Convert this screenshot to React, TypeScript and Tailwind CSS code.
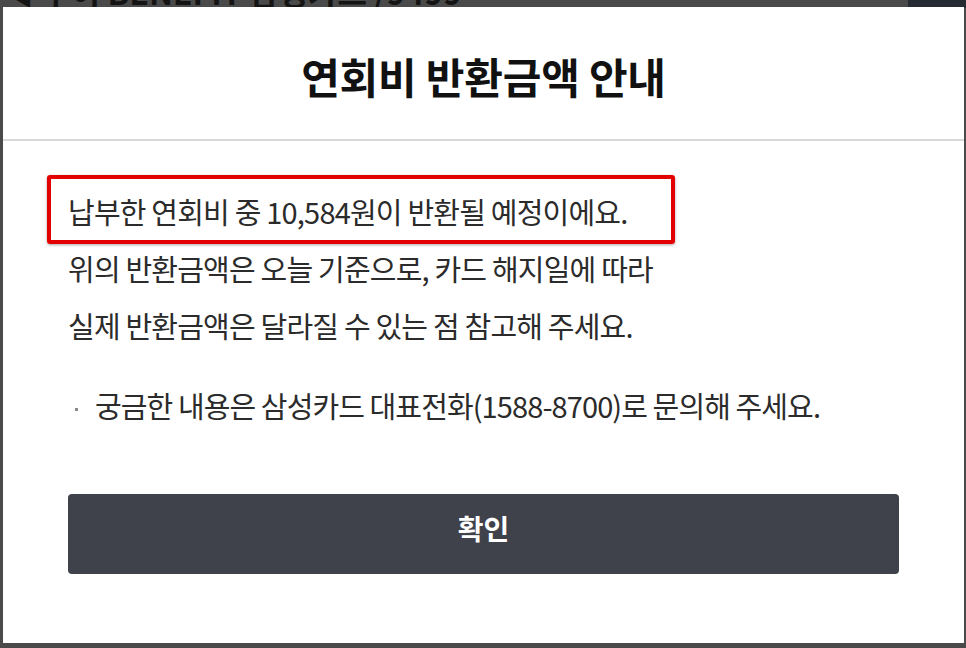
import React from 'react';

const font = { fontFamily: '"Noto Sans CJK KR", "Noto Sans", sans-serif' };

const BodyLine: React.FC<{ children: React.ReactNode }> = ({ children }) => (
  <p className="text-[29px] leading-[57px] tracking-[-0.8px] text-[#2b2b2b] whitespace-nowrap">{children}</p>
);

const App: React.FC = () => {
  return (
    <div style={font} className="relative w-[966px] h-[648px] bg-[#4a4a4a] overflow-hidden">
      {/* dimmed page behind the dialog */}
      <div className="-mt-[24px] pl-[2px] text-[32px] leading-[31px] font-bold text-[#141414] whitespace-nowrap">
        ◀ 부이 BENEFIT 삼성카드 /9499
      </div>
      <div className="absolute right-0 top-0 w-[58px] h-[8px] bg-[#262a33]" />

      {/* dialog */}
      <div className="absolute left-[3px] top-[7px] w-[961px] h-[636px] bg-white flex flex-col">
        <div className="h-[134px] shrink-0 flex items-center justify-center pt-[4px] border-b-2 border-[#d9d9d9]">
          <h1 className="text-[42px] font-bold tracking-[-0.2px] text-[#111]">연회비 반환금액 안내</h1>
        </div>

        <div className="relative flex flex-col pt-[42px] px-[65px]">
          <BodyLine>납부한 연회비 중 10,584원이 반환될 예정이에요.</BodyLine>
          <BodyLine>위의 반환금액은 오늘 기준으로, 카드 해지일에 따라</BodyLine>
          <BodyLine>실제 반환금액은 달라질 수 있는 점 참고해 주세요.</BodyLine>

          <div className="mt-[23px] flex items-center">
            <span className="w-[27px] shrink-0 flex items-center">
              <span className="ml-[7px] mt-[8px] w-[3px] h-[3px] bg-[#8a8a8a]" />
            </span>
            <p className="text-[29px] leading-[57px] tracking-[-0.9px] text-[#2b2b2b] whitespace-nowrap">
              궁금한 내용은 삼성카드 대표전화(1588-8700)로 문의해 주세요.
            </p>
          </div>

          <button className="mt-[60px] h-[80px] w-full rounded-[4px] bg-[#3f414b] text-white text-[28px] font-bold pb-[12px]">
            확인
          </button>

          {/* highlight box over the first line */}
          <div className="absolute left-[44px] top-[34px] w-[628px] h-[69px] border-[4px] border-[#e30000] rounded-[3px] shadow-[0_1px_3px_rgba(0,0,0,0.35)]" />
        </div>
      </div>
    </div>
  );
};

export default App;
